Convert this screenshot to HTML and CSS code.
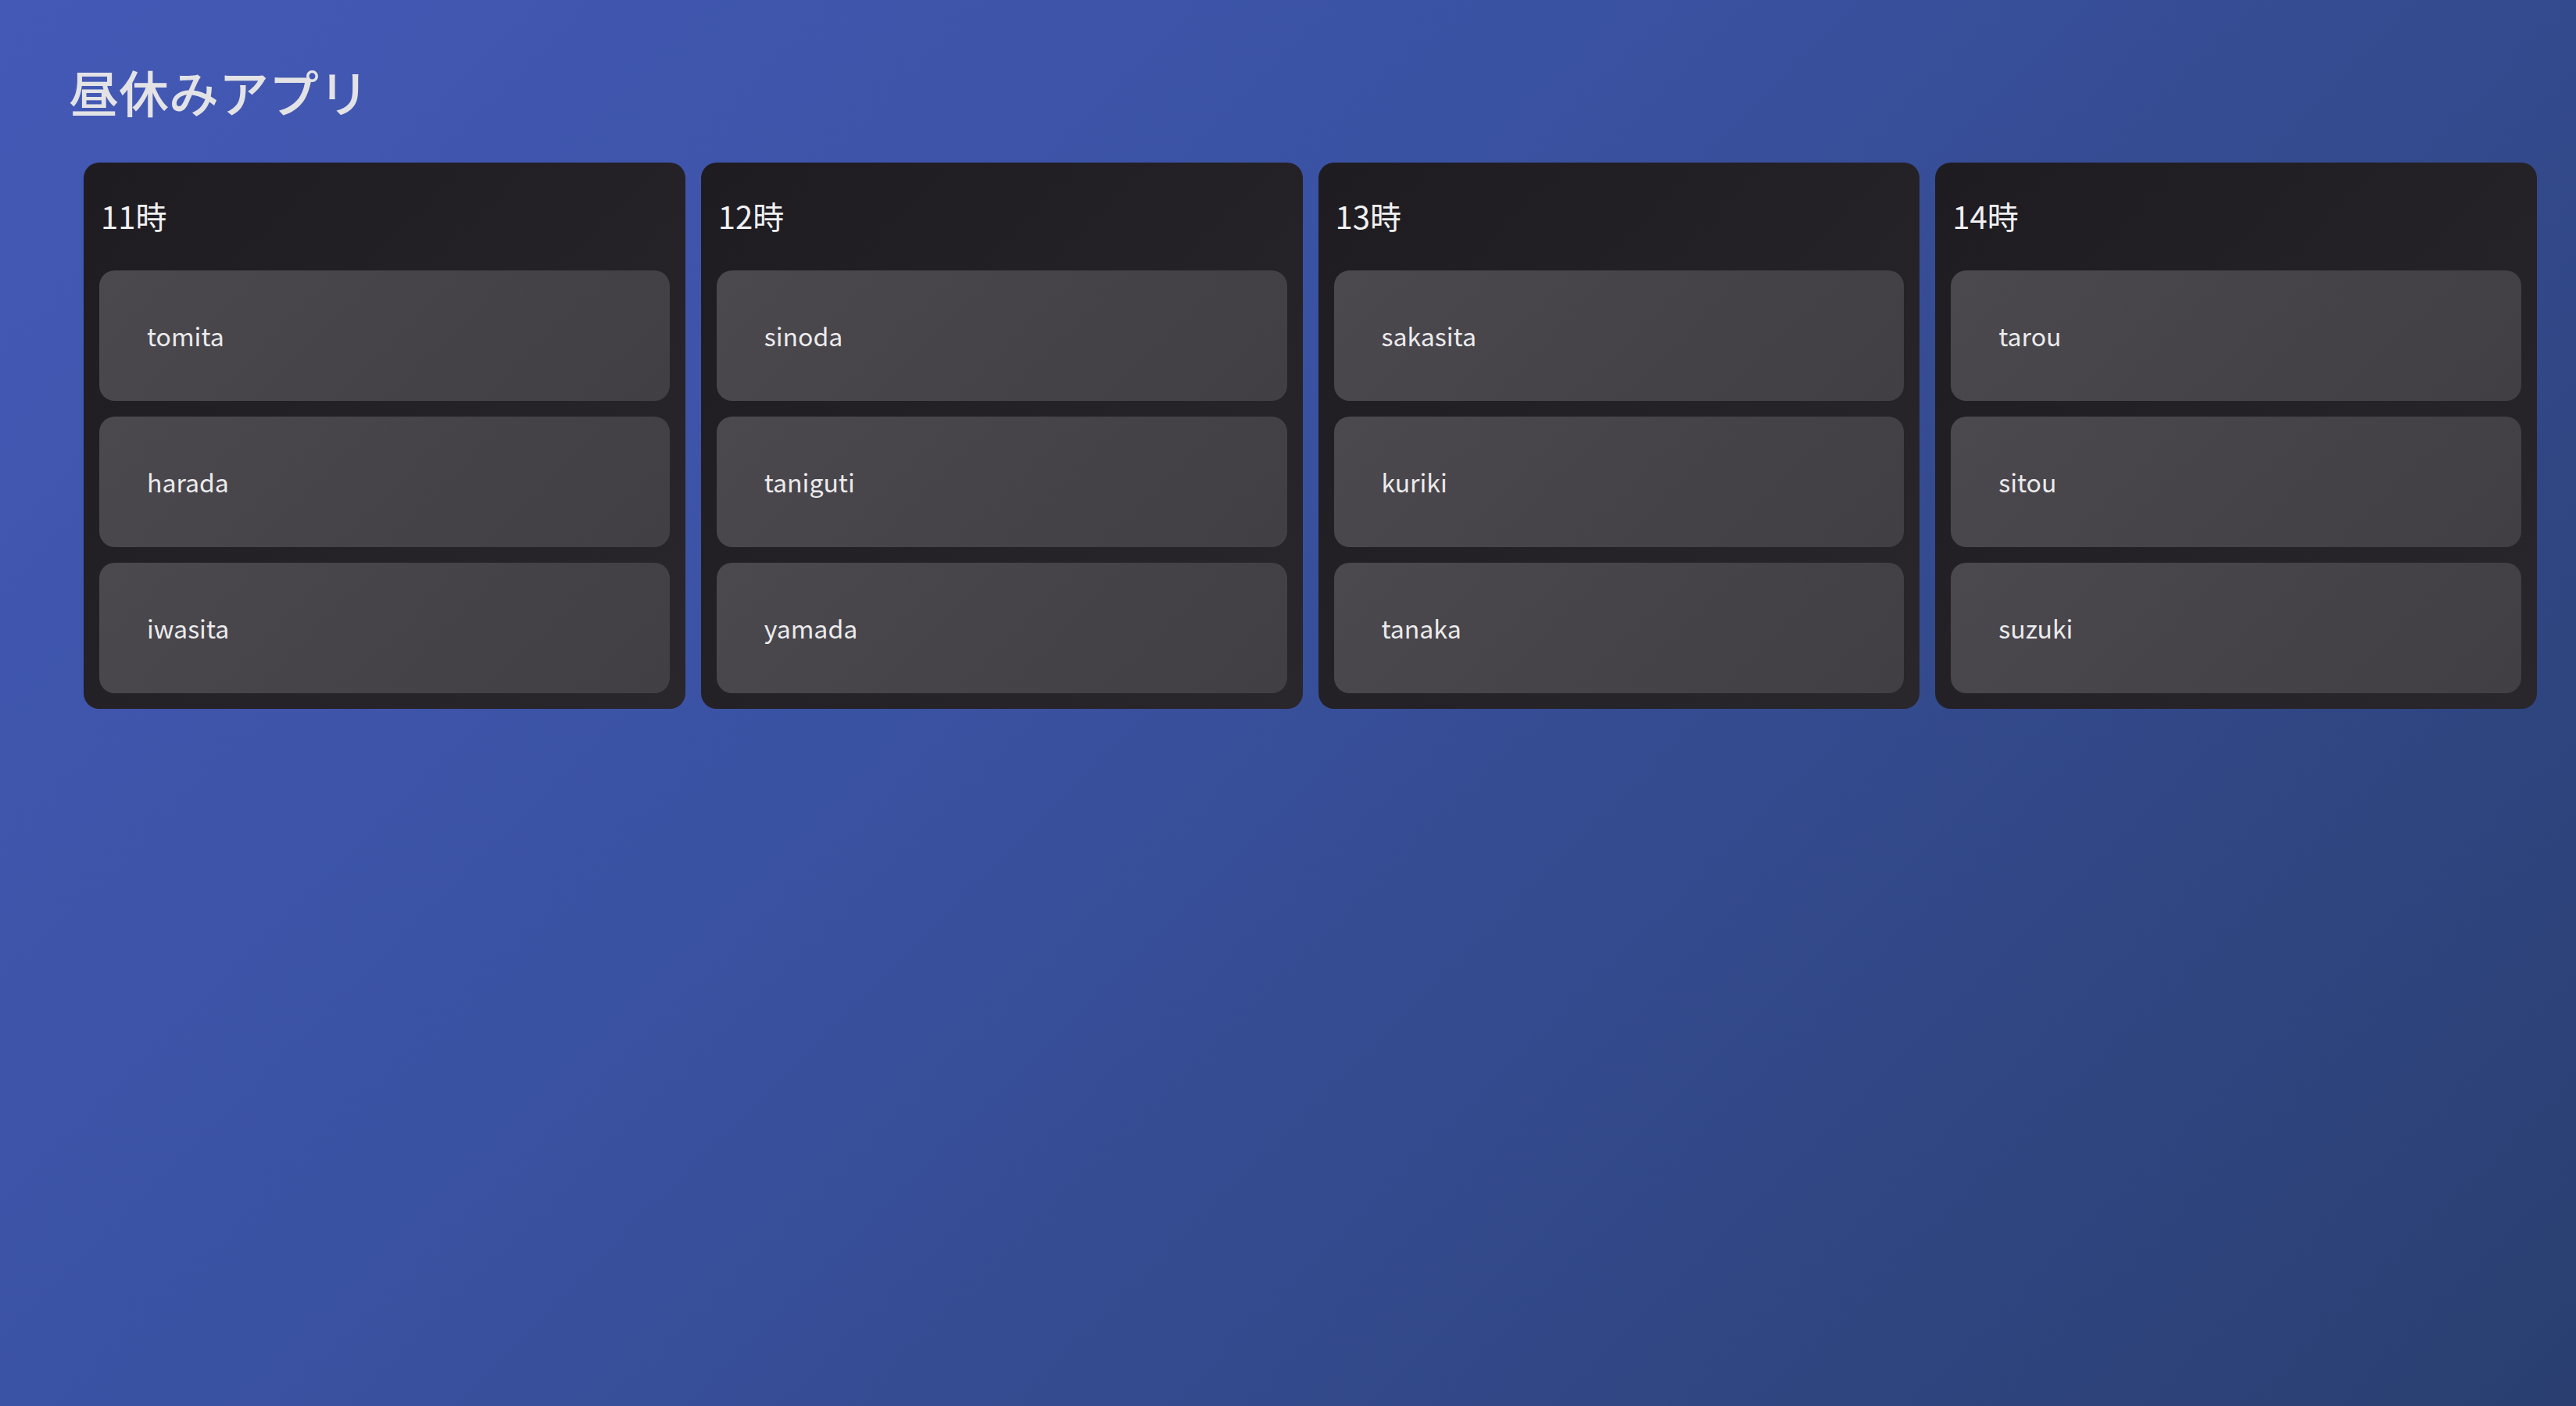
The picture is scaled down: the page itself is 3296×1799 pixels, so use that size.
FILE: index.html
```html
<!DOCTYPE html>
<html lang="ja">

<head>
    <meta charset="UTF-8" />
    <meta name="viewport" content="width=device-width, initial-scale=1.0" />
    <title>昼休みアプリ</title>
    <link rel="stylesheet" href="styles.css">
</head>

<body>
    <div class="app">
        <h1 class="title">昼休みアプリ</h1>
        <main class="board">
            <section class="column">
                <h2 class="column-title">11時</h2>
                <div class="member">tomita</div>
                <div class="member">harada</div>
                <div class="member">iwasita</div>
            </section>
            <section class="column">
                <h2 class="column-title">12時</h2>
                <div class="member">sinoda</div>
                <div class="member">taniguti</div>
                <div class="member">yamada</div>
            </section>
            <section class="column">
                <h2 class="column-title">13時</h2>
                <div class="member">sakasita</div>
                <div class="member">kuriki</div>
                <div class="member">tanaka</div>
            </section>
            <section class="column">
                <h2 class="column-title">14時</h2>
                <div class="member">tarou</div>
                <div class="member">sitou</div>
                <div class="member">suzuki</div>
            </section>
        </main>
    </div>
</body>

</html>
```

FILE: styles.css
```css
html,
body {
    margin: 0;
    min-height: 100%;
}

body {
    min-height: 100vh;
    background: linear-gradient(135deg, #4459b6 0%, #3a52a2 40%, #2a3f70 100%);
    font-family: "Noto Sans CJK JP", "Noto Sans", sans-serif;
    color: #ececec;
}

.app {
    padding: 78px 50px 0 88px;
}

.title {
    margin: 0 0 53px;
    font-size: 64px;
    font-weight: 500;
    line-height: 1.2;
    color: #e3e3e6;
}

.board {
    margin-left: 19px;
    display: grid;
    grid-template-columns: repeat(4, 1fr);
    gap: 20px;
    align-items: start;
}

.column {
    padding: 0 20px 20px;
    border-radius: 20px;
    background: linear-gradient(135deg, #1f1c21 0%, #29262c 100%);
    display: flex;
    flex-direction: column;
    gap: 20px;
}

.column-title {
    margin: 44px 2px 26px;
    font-size: 40px;
    font-weight: 400;
    line-height: 1.2;
    color: #f0f0f2;
}

.member {
    height: 167px;
    padding-left: 61px;
    display: flex;
    align-items: center;
    border-radius: 20px;
    background: linear-gradient(135deg, #4b484e 0%, #413f43 100%);
    font-size: 32px;
    color: #ebebed;
    box-sizing: border-box;
}
```
